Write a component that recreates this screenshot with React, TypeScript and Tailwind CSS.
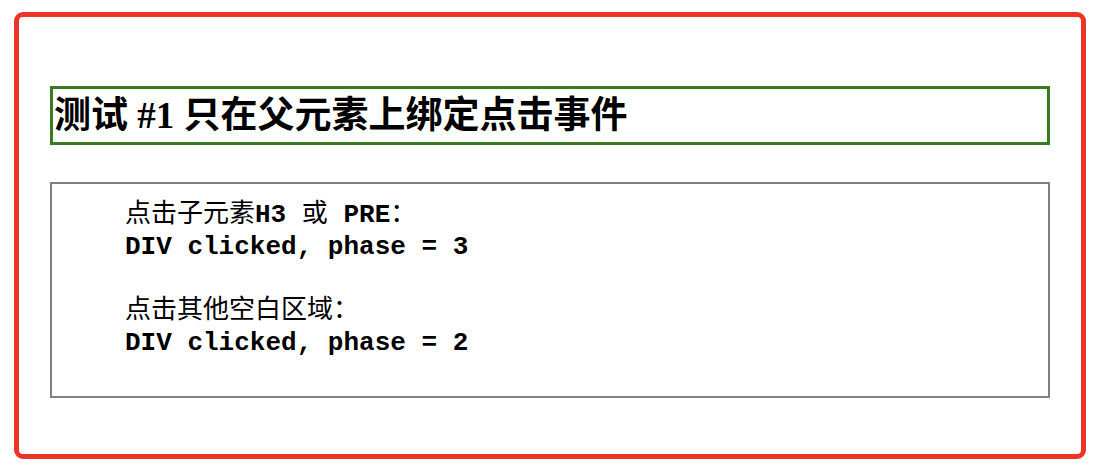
import React from "react";

function C({ children }: { children: React.ReactNode }) {
  return <span className="font-normal">{children}</span>;
}

export default function App() {
  return (
    <div className="w-[1104px] h-[466px] bg-white pt-[12px] pl-[14px]">
      <div className="w-[1072px] h-[447px] border-[5px] border-[#ec3526] rounded-[9px] px-[31px] pt-[69px]">
        <h3
          className="h-[59px] border-[3px] border-[#3a7b22] flex items-center pl-[1px] text-[37px] font-bold text-black leading-none"
          style={{ fontFamily: '"Liberation Serif", "Noto Sans CJK SC", serif' }}
        >
          测试 #1 只在父元素上绑定点击事件
        </h3>
        <div className="mt-[37px] h-[216px] border-2 border-[#808080] pl-[73px] pt-[15px]">
          <pre
            className="text-[26px] leading-[32px] text-black font-bold"
            style={{ fontFamily: '"Liberation Mono", "Noto Sans CJK SC", monospace' }}
          >
            <C>点击子元素</C>H3 <C>或</C> PRE<C>：</C>
            {"\n"}DIV clicked, phase = 3{"\n"}
            {"\n"}
            <C>点击其他空白区域：</C>
            {"\n"}DIV clicked, phase = 2
          </pre>
        </div>
      </div>
    </div>
  );
}
